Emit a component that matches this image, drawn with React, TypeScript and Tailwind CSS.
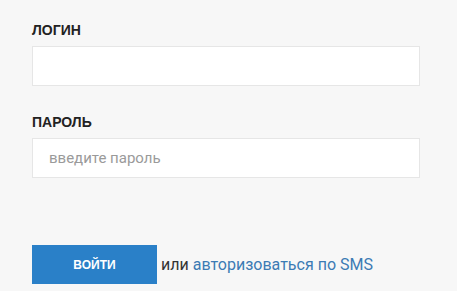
export default function App() {
  return (
    <div className="min-h-screen w-full bg-[#f7f7f7] pt-[22px] pl-8 font-['Roboto',sans-serif]">
      <div className="w-[388px]">
        <label className="block font-['Liberation_Sans',Arial,sans-serif] text-[14px] font-bold leading-4 text-[#222]">
          ЛОГИН
        </label>
        <input
          type="text"
          className="mt-[8px] block h-10 w-full border border-[#e6e6e6] bg-white px-4 text-[15px] outline-none"
        />
        <label className="mt-[28px] block font-['Liberation_Sans',Arial,sans-serif] text-[14px] font-bold leading-4 text-[#222]">
          ПАРОЛЬ
        </label>
        <input
          type="password"
          placeholder="введите пароль"
          className="mt-[8px] block h-10 w-full border border-[#e6e6e6] bg-white px-4 text-[15px] text-[#333] outline-none placeholder:text-[#9a9a9a]"
        />
        <div className="mt-[67px] flex items-center">
          <button className="h-[39px] w-[125px] bg-[#2a80c8] font-['Liberation_Sans',Arial,sans-serif] text-[12px] font-bold text-white">
            ВОЙТИ
          </button>
          <span className="ml-[4px] text-[16px] text-[#333]">
            или <a href="#" className="text-[#3c7bb4]">авторизоваться по SMS</a>
          </span>
        </div>
      </div>
    </div>
  );
}
